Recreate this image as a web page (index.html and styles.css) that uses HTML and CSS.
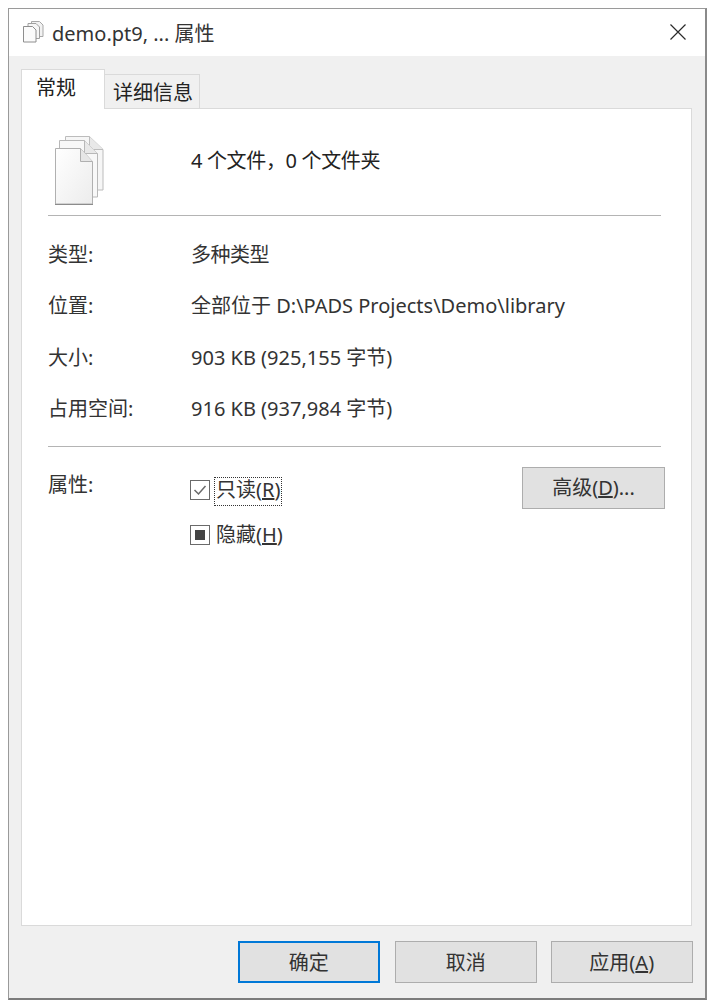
FILE: index.html
```html
<!DOCTYPE html>
<html lang="zh-CN">
<head>
<meta charset="utf-8">
<title>demo.pt9, ... 属性</title>
<link rel="stylesheet" href="styles.css">
</head>
<body>
<div class="window">
  <header class="titlebar">
    <svg class="title-icon" width="23" height="23" viewBox="0 0 23 23">
      <path d="M9.500 1.500h8l3.500 3.500v11.500h-11.500z" fill="#f2f2f2" stroke="#a8a8a8"/>
      <path d="M6 3.500h8l3.500 3.500v11.500h-11.500z" fill="#f6f6f6" stroke="#a0a0a0"/>
      <path d="M1.500 6.500h9l3.500 3.500v12h-12.500z" fill="#fbfbfb" stroke="#8e8e8e"/>
    </svg>
    <span class="title-text">demo.pt9, ... 属性</span>
    <svg class="close-icon" width="16" height="16" viewBox="0 0 16 16">
      <path d="M.5.500l15 15M15.500.500l-15 15" stroke="#2a2a2a" stroke-width="1.200" fill="none"/>
    </svg>
  </header>
  <main class="body">
    <nav class="tabs">
      <div class="tab tab-active">常规</div>
      <div class="tab tab-idle">详细信息</div>
    </nav>
    <section class="panel">
      <div class="summary">
        <svg class="files-icon" width="54" height="72" viewBox="0 0 54 72">
          <defs>
            <linearGradient id="sheet" x1="0" y1="0" x2="1" y2="1">
              <stop offset="0" stop-color="#ffffff"/>
              <stop offset="1" stop-color="#ececec"/>
            </linearGradient>
          </defs>
          <path d="M13.500 1.500h24l13.500 13v40.500h-37.500z" fill="#f6f6f6" stroke="#bcbcbc"/>
          <path d="M37.500 1.500v13h13.500" fill="#e8e8e8" stroke="#bcbcbc"/>
          <path d="M7.500 5.500h25l13 13v43.500h-38z" fill="#f8f8f8" stroke="#b8b8b8"/>
          <path d="M32.500 5.500v13h13" fill="#e8e8e8" stroke="#b8b8b8"/>
          <path d="M3.500 13.500h25l12 13v42.500h-37z" fill="url(#sheet)" stroke="#b0b0b0"/>
          <path d="M28.500 13.500v13h12" fill="#e6e6e6" stroke="#b0b0b0"/>
          <path d="M3 69.500h38" fill="none" stroke="#8c8c8c"/>
        </svg>
        <span class="summary-text">4 个文件，0 个文件夹</span>
      </div>
      <hr class="rule">
      <dl class="props">
        <div class="prop"><dt>类型:</dt><dd class="tight">多种类型</dd></div>
        <div class="prop"><dt>位置:</dt><dd>全部位于 D:\PADS Projects\Demo\library</dd></div>
        <div class="prop"><dt>大小:</dt><dd>903 KB (925,155 字节)</dd></div>
        <div class="prop"><dt>占用空间:</dt><dd>916 KB (937,984 字节)</dd></div>
      </dl>
      <hr class="rule rule-second">
      <div class="attrs">
        <span class="attrs-label">属性:</span>
        <div class="checks">
          <div class="check">
            <svg class="box" width="20" height="20" viewBox="0 0 20 20">
              <rect x=".5" y=".5" width="19" height="19" fill="#fff" stroke="#6a6a6a"/>
              <path d="M4.500 10l4 4 7-8" fill="none" stroke="#6a6a6a" stroke-width="1.500"/>
            </svg>
            <span class="check-label check-focus">只读(<u>R</u>)</span>
          </div>
          <div class="check check-plain">
            <svg class="box" width="20" height="20" viewBox="0 0 20 20">
              <rect x=".5" y=".5" width="19" height="19" fill="#fff" stroke="#6a6a6a"/>
              <rect x="5" y="5" width="10" height="10" fill="#444"/>
            </svg>
            <span class="check-label">隐藏(<u>H</u>)</span>
          </div>
        </div>
        <button class="btn btn-advanced">高级(<u>D</u>)...</button>
      </div>
    </section>
    <footer class="actions">
      <button class="btn btn-action btn-default">确定</button>
      <button class="btn btn-action">取消</button>
      <button class="btn btn-action">应用(<u>A</u>)</button>
    </footer>
  </main>
</div>
</body>
</html>
```
FILE: styles.css
```css
* { box-sizing: border-box; }
html, body { margin: 0; padding: 0; background: #fff; }
body {
  width: 711px;
  height: 1003px;
  padding: 8px 4px 3px 8px;
  font-family: "Noto Sans", "Noto Sans CJK SC", sans-serif;
  font-size: 20px;
  line-height: 24px;
  color: #222;
  overflow: hidden;
}
.window {
  width: 699px;
  height: 992px;
  display: flex;
  flex-direction: column;
  border: 1px solid #9a9a9a;
  border-right: 2px solid #8a8a8a;
  border-bottom: 2px solid #7c7c7c;
  background: #f0f0f0;
}
.titlebar {
  height: 47px;
  flex: none;
  display: flex;
  align-items: center;
  padding: 0 19px 0 13px;
  background: #fff;
}
.title-icon { flex: none; margin-right: 7px; margin-top: -2px; }
.title-text { flex: 1; color: #333; margin-top: 2px; }
.close-icon { flex: none; margin-top: -2px; }
.body {
  flex: 1;
  display: flex;
  flex-direction: column;
  padding: 15px 13px 15px 12px;
}
.tabs {
  height: 38px;
  flex: none;
  display: flex;
  align-items: flex-end;
  position: relative;
  z-index: 1;
  margin-bottom: -1px;
}
.tab {
  display: flex;
  align-items: center;
  border: 1px solid #dadada;
  border-bottom: 0;
  color: #222;
}
.tab-active {
  width: 84px;
  height: 40px;
  padding: 0 0 4px 14px;
  background: #fff;
}
.tab-idle {
  width: 95px;
  height: 35px;
  padding: 2px 0 0 8px;
  background: #f0f0f0;
  border-left: 0;
  border-bottom: 1px solid #dadada;
}
.panel {
  width: 671px;
  height: 818px;
  flex: none;
  padding: 0 30px 0 26px;
  background: #fff;
  border: 1px solid #dadada;
}
.summary {
  height: 106px;
  display: flex;
  align-items: flex-start;
  padding: 26px 0 0 4px;
}
.files-icon { flex: none; }
.summary-text { margin: 14px 0 0 85px; color: #222; letter-spacing: -.35px; }
.rule {
  height: 1px;
  margin: 0;
  border: 0;
  background: #b4b4b4;
}
.props { margin: 0; padding-top: 13px; }
.prop {
  height: 51.500px;
  display: flex;
  align-items: center;
}
.prop dt { width: 143px; color: #333; }
.prop dd { margin: 0; color: #333; }
.prop dd.tight { letter-spacing: -.5px; }
.rule-second { margin-top: 11px; }
.attrs {
  display: flex;
  align-items: flex-start;
  padding-top: 20px;
  margin-right: -4px;
}
.attrs-label { width: 142px; margin-top: 6px; color: #333; }
.checks {
  flex: 1;
  display: flex;
  flex-direction: column;
  gap: 21px;
  padding-top: 11px;
}
.check {
  display: flex;
  align-items: center;
  height: 24px;
  gap: 6px;
}
.check-plain { gap: 5px; }
.box { flex: none; }
.check-label { color: #333; padding: 0 1px; }
.check-focus {
  outline: 1px dotted #333;
  margin-left: -1px;
  height: 27px;
  margin-top: 2px;
}
.btn {
  width: 143px;
  height: 42px;
  padding: 0;
  border: 1px solid #adadad;
  background: #e1e1e1;
  font: inherit;
  color: #333;
}
.btn-action { width: 142.500px; padding-top: 2px; }
.btn-advanced { flex: none; }
.btn-default { border: 2px solid #0078d7; margin-right: 1px; }
.actions {
  flex: 1;
  display: flex;
  justify-content: flex-end;
  align-items: flex-end;
  gap: 13.500px;
  margin-right: -1px;
}
```
